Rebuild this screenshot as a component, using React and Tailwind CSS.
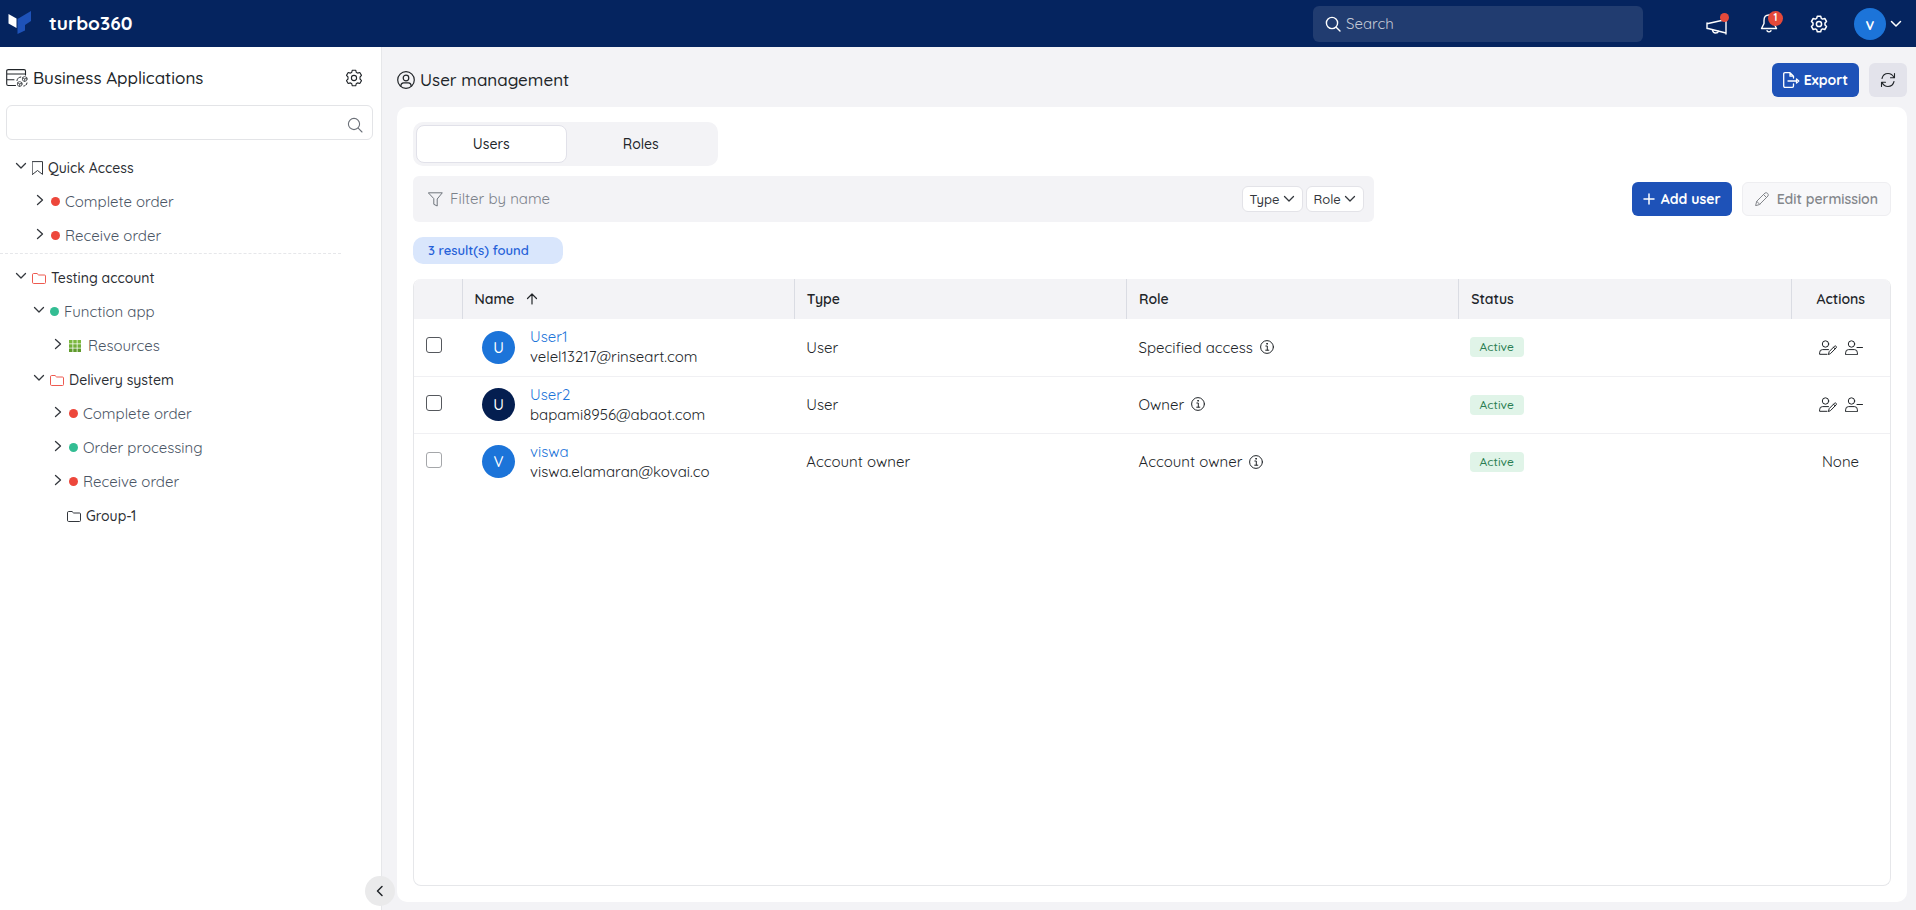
import React from "react";

const sv = (w, h, kids, sw = 1.2) => (
  <svg width={w} height={h} viewBox={`0 0 ${w} ${h}`} fill="none" stroke="currentColor" strokeWidth={sw} strokeLinecap="round" strokeLinejoin="round" aria-hidden="true" className="shrink-0">
    {kids}
  </svg>
);

const Logo = () => (
  <svg width="24" height="24" viewBox="0 0 24 24" aria-hidden="true" className="shrink-0">
    <path d="M0.500 3 L8.500 7.500 V17 L0.500 12.500 Z" fill="#fff" />
    <path d="M23 0 V10 L17 14 V19.500 L9.500 23 V8 Z" fill="#1e52b8" />
  </svg>
);
const Gear = ({ sw = 1.2 }) =>
  sv(18, 18, <>
    <path d="M7.300 1.200 H10.700 L11.300 3.400 L12.600 4.100 L14.800 3.500 L16.500 6.400 L15 8 V10 L16.500 11.600 L14.800 14.500 L12.600 13.900 L11.300 14.600 L10.700 16.800 H7.300 L6.700 14.600 L5.400 13.900 L3.200 14.500 L1.500 11.600 L3 10 V8 L1.500 6.400 L3.200 3.500 L5.400 4.100 L6.700 3.400 Z" />
    <circle cx="9" cy="9" r="2.600" />
  </>, sw);
const SearchIcon = ({ sw = 1.3 }) => sv(16, 16, <><circle cx="7" cy="7" r="5.600" /><path d="M11.200 11.200 L15 15" /></>, sw);
const Chevron = ({ dir = "down", sw = 1.5 }) =>
  sv(12, 12, dir === "down" ? <path d="M1.500 3.500 L6 8 L10.500 3.500" /> : dir === "right" ? <path d="M3.500 1.500 L8.500 6 L3.500 10.500" /> : <path d="M8 1.500 L3.500 6 L8 10.500" />, sw);
const Folder = () => sv(14, 11, <path d="M0.500 1.500 Q0.500 0.500 1.500 0.500 H5 L6.700 2 H12.500 Q13.500 2 13.500 3 V9.500 Q13.500 10.500 12.500 10.500 H1.500 Q0.500 10.500 0.500 9.500 Z" />, 1);
const Bookmark = () => sv(11, 14, <path d="M0.500 0.600 H10.500 V13.400 L5.500 9.500 L0.500 13.400 Z" />, 1);
const AppIcon = () =>
  sv(22, 18, <>
    <path d="M9.500 16.500 H2.300 Q0.700 16.500 0.700 15 V2 Q0.700 0.600 2.300 0.600 H18 Q19.500 0.600 19.500 2 V6 M0.700 5 H19.500 M0.700 10.800 H8" />
    <g strokeWidth="0.700">
      <circle cx="18.700" cy="10" r="2.400" />
      <circle cx="13.700" cy="15" r="2.400" />
      <path d="M18.700 10 V12.400 M16.600 8.900 L18.700 10 L20.800 8.900" />
      <path d="M13.700 15 V17.400 M11.600 13.900 L13.700 15 L15.800 13.900" />
      <path d="M11 11.500 Q11.500 8.500 14.800 8 M21 14 Q20.500 16.500 17.800 17" strokeWidth="1" strokeDasharray="2 1.500" />
    </g>
  </>, 1.1);
const Funnel = () => sv(15, 15, <path d="M0.700 0.800 H14.300 L9.200 7 V14 L5.800 12.300 V7 Z" />, 1);
const Info = () => sv(14, 14, <><circle cx="7" cy="7" r="6.400" /><path d="M5.800 6 H7.300 V10 M5.700 10.200 H8.800" /><circle cx="7" cy="3.800" r="0.400" fill="currentColor" /></>, 1);
const UserCircle = () => sv(18, 18, <><circle cx="9" cy="9" r="8.300" /><circle cx="9" cy="7" r="2.800" /><path d="M3.800 15 Q4 11.800 6.500 11.800 H11.500 Q14 11.800 14.200 15" /></>);
const UserEdit = () => sv(18, 15, <><circle cx="6.500" cy="4" r="3.200" /><path d="M8 14.300 H0.600 V12.800 Q0.600 9.600 3.500 9.600 H9.500" /><path d="M9.500 14.200 L10.200 11.600 L15.500 6.200 Q16.600 5.500 17.300 6.500 Q17.700 7.300 17 8 L11.800 13.300 Z M14.500 7.200 L16 8.800" /></>, 1);
const UserMinus = () => sv(18, 15, <><circle cx="6.500" cy="4" r="3.200" /><path d="M0.600 14.300 V12.800 Q0.600 9.600 3.500 9.600 H9.500 Q12.400 9.600 12.400 12.800 V14.300 Z M12 7.500 H17.500" /></>, 1);
const Pencil = () => sv(14, 14, <path d="M0.700 13.300 L1.700 9.300 L10 1 Q11.300 0.200 12.600 1.400 Q13.800 2.700 13 4 L4.700 12.300 Z M8.500 2.500 L11.500 5.500 M1.700 9.300 L4.700 12.300" />, 1);
const Plus = () => sv(12, 12, <path d="M6 1 V11 M1 6 H11" />, 1.5);
const ArrowUp = () => sv(12, 12, <path d="M6 11 V1.500 M1.500 5.500 L6 1 L10.500 5.500" />, 1.2);
const Megaphone = () => sv(22, 18, <><path d="M1 6 V11.500 M1 6.800 L20 2.500 V16 L1 11.200 M20 2 V17" /><path d="M6.500 12.800 Q7 16 9.500 16 Q12 16 12.500 14.300" /></>, 1.4);
const Bell = () => sv(18, 19, <><path d="M9 1 Q14 1 14 6.500 V9.500 L16.500 14.500 H1.500 L4 9.500 V6.500 Q4 1 9 1 Z" /><path d="M7 16.700 Q9 19 11 16.700" /></>, 1.4);
const ExportIcon = () => sv(17, 16, <><path d="M10.500 12 V14 Q10.500 15.300 9.200 15.300 H2 Q0.700 15.300 0.700 14 V2 Q0.700 0.700 2 0.700 H7 L10.500 4.200 V6 M7 0.700 V4.200 H10.500" /><path d="M5 9 H13 M13.500 7 L15.800 9 L13.500 11 Z" /></>, 1.3);
const Refresh = () => sv(16, 16, <path d="M2 6.500 Q3.200 1.500 8 1.500 Q12 1.500 14 5.500 M14.500 1.500 V5.700 H10.500 M14 9.500 Q12.800 14.500 8 14.500 Q4 14.500 2 10.500 M1.500 14.500 V10.300 H5.500" />, 1.1);
const GridIcon = () => (
  <svg width="14" height="12" viewBox="0 0 14 12" aria-hidden="true" className="shrink-0">
    {[0, 4.25, 8.5].map((y, r) => [0, 4.25, 8.5].map((x) => <rect key={x + "-" + y} x={x} y={y} width="3.500" height="3.500" fill={["#7cb83f", "#72ae38", "#5f9a2c"][r]} />))}
  </svg>
);

const Dot = ({ ok }) => <span className={`size-[9px] shrink-0 rounded-full ${ok ? "bg-[#33bd93]" : "bg-[#ed473b]"}`} />;
const RedFolder = () => <span className="text-[#ee5a50]"><Folder /></span>;

function Node({ pad, open, icon, label, strong }) {
  return (
    <li className={`flex h-[34px] items-center ${pad}`}>
      <button type="button" className="flex items-center gap-[5px] text-[#33373d]">
        {open === undefined ? null : <span className="pb-1"><Chevron dir={open ? "down" : "right"} sw={1.3} /></span>}
        {icon}
        <span className={strong ? "font-medium text-[#2b2e33]" : "text-[15px] text-[#4a5565]"}>{label}</span>
      </button>
    </li>
  );
}

const Th = ({ children, className = "text-left" }) => (
  <th scope="col" className={`h-10 border-l border-[#dadce3] px-3 font-semibold ${className}`}>{children}</th>
);

const users = [
  { name: "User1", mail: "velel13217@rinseart.com", ini: "U", bg: "bg-[#1c74d9]", type: "User", role: "Specified access", editable: true },
  { name: "User2", mail: "bapami8956@abaot.com", ini: "U", bg: "bg-[#041e50]", type: "User", role: "Owner", editable: true },
  { name: "viswa", mail: "viswa.elamaran@kovai.co", ini: "V", bg: "bg-[#1c74d9]", type: "Account owner", role: "Account owner", editable: false },
];

export default function App() {
  return (
    <div className="flex min-h-screen flex-col bg-white font-['Quicksand','Inter',sans-serif] text-sm text-[#212529]">
      <header className="flex h-[47px] items-center bg-[#05245f] pr-[14px] pl-2 text-white">
        <a href="#home" className="flex items-center gap-[17px]">
          <Logo />
          <span className="text-[19px] font-bold">turbo360</span>
        </a>
        <label className="mr-[63px] ml-auto flex h-9 w-[330px] items-center gap-[5px] rounded-md bg-[#213c70] px-3">
          <SearchIcon sw={1.4} />
          <input type="text" aria-label="Search" placeholder="Search" className="min-w-0 flex-1 bg-transparent text-[15px] outline-none placeholder:text-[#c3c9d6]" />
        </label>
        <div className="flex items-center">
          <button type="button" aria-label="Announcements" className="relative mr-8 pt-1">
            <Megaphone />
            <span className="absolute top-0 -right-px size-[9px] rounded-full bg-[#e5493a]" />
          </button>
          <button type="button" aria-label="Notifications" className="relative mr-8">
            <Bell />
            <span className="absolute -top-[3px] -right-[5px] flex size-[15px] items-center justify-center rounded-full bg-[#e5493a] text-[10px] font-bold">1</span>
          </button>
          <button type="button" aria-label="Settings" className="mr-[26px]"><Gear sw={1.5} /></button>
          <button type="button" aria-label="Account" className="flex items-center gap-1">
            <span className="flex size-8 items-center justify-center rounded-full bg-[#1c74d9] text-base font-semibold">v</span>
            <Chevron />
          </button>
        </div>
      </header>

      <div className="flex flex-1">
        <aside className="relative w-[382px] shrink-0 border-r border-[#e6e7ea] bg-white">
          <div className="flex h-[58px] items-center pt-1 pr-[18px] pl-[6px]">
            <AppIcon />
            <h2 className="ml-[5px] text-[17px] font-medium">Business Applications</h2>
            <button type="button" aria-label="Application settings" className="ml-auto"><Gear sw={1.1} /></button>
          </div>
          <label className="mr-2 ml-[6px] flex h-[35px] items-center rounded-md border border-[#e3e4e7] pt-1 pr-[9px] pl-3 text-[#6b7078]">
            <input type="text" aria-label="Search applications" className="min-w-0 flex-1 outline-none" />
            <SearchIcon sw={1.1} />
          </label>
          <ul className="mr-10 border-b border-dashed border-[#e6e7ea] pt-[11px]">
            <Node pad="pl-[15px]" open icon={<Bookmark />} label="Quick Access" strong />
            <Node pad="pl-[34px]" open={false} icon={<Dot />} label="Complete order" />
            <Node pad="pl-[34px]" open={false} icon={<Dot />} label="Receive order" />
          </ul>
          <ul className="pt-[7px]">
            <Node pad="pl-[15px]" open icon={<RedFolder />} label="Testing account" strong />
            <Node pad="pl-[33px]" open icon={<Dot ok />} label="Function app" />
            <Node pad="pl-[52px]" open={false} icon={<GridIcon />} label="Resources" />
            <Node pad="pl-[33px]" open icon={<RedFolder />} label="Delivery system" strong />
            <Node pad="pl-[52px]" open={false} icon={<Dot />} label="Complete order" />
            <Node pad="pl-[52px]" open={false} icon={<Dot ok />} label="Order processing" />
            <Node pad="pl-[52px]" open={false} icon={<Dot />} label="Receive order" />
            <Node pad="pl-[67px]" icon={<Folder />} label="Group-1" strong />
          </ul>
          <button type="button" aria-label="Collapse sidebar" className="absolute -right-[14px] bottom-1 z-10 flex size-[30px] items-center justify-center rounded-full bg-[#eaeaeb]">
            <Chevron dir="left" />
          </button>
        </aside>

        <main className="flex min-w-0 flex-1 flex-col bg-[#f3f3f6] pr-[9px] pb-2 pl-[15px]">
          <div className="flex h-[60px] items-center pt-[6px]">
            <UserCircle />
            <h1 className="ml-[5px] text-[17px] font-medium">User management</h1>
            <button type="button" className="ml-auto flex h-[34px] items-center gap-1 rounded-md bg-[#1e52b8] px-[11px] font-bold text-white">
              <ExportIcon /> Export
            </button>
            <button type="button" aria-label="Refresh" className="ml-[10px] flex h-[34px] w-[38px] items-center justify-center rounded-md bg-[#e3e3eb]">
              <Refresh />
            </button>
          </div>

          <section className="flex flex-1 flex-col rounded-[10px] bg-white px-4 pt-[15px] pb-4">
            <div role="tablist" className="flex h-11 w-[305px] rounded-[10px] bg-[#f3f3f6] p-[3px]">
              <button type="button" role="tab" aria-selected="true" className="flex-1 rounded-lg border border-[#e1e1e9] bg-white font-medium">Users</button>
              <button type="button" role="tab" aria-selected="false" className="flex-1 rounded-lg font-medium">Roles</button>
            </div>

            <div className="mt-[10px] flex items-center">
              <div className="flex h-[46px] w-[65%] items-center gap-[3px] rounded-md bg-[#f3f3f6] pr-[10px] pl-[15px] text-[#6f757d]">
                <Funnel />
                <input type="text" aria-label="Filter by name" placeholder="Filter by name" className="ml-1 min-w-0 flex-1 bg-transparent text-[15px] outline-none placeholder:text-[#7b818a]" />
                <button type="button" className="flex h-[26px] items-center gap-[3px] rounded-md border border-[#e3e3e8] bg-white px-[7px] text-[13px] font-medium text-[#33373d]">Type <Chevron sw={1.3} /></button>
                <button type="button" className="flex h-[26px] items-center gap-[3px] rounded-md border border-[#e3e3e8] bg-white px-[7px] text-[13px] font-medium text-[#33373d]">Role <Chevron sw={1.3} /></button>
              </div>
              <button type="button" className="ml-auto flex h-[34px] items-center gap-[6px] rounded-md bg-[#1e52b8] px-[11px] font-bold text-white"><Plus /> Add user</button>
              <button type="button" disabled className="ml-[10px] flex h-[34px] items-center gap-2 rounded-md border border-[#eeeef1] bg-[#f8f8fa] px-3 font-semibold text-[#83868b]"><Pencil /> Edit permission</button>
            </div>

            <p className="mt-[15px] flex h-[27px] w-[150px] items-center rounded-[10px] bg-[#d9e6fc] px-[15px] text-[13px] font-semibold text-[#2460d8]">3 result(s) found</p>

            <div className="mt-[15px] flex-1 overflow-hidden rounded-lg border border-t-0 border-[#e6e7ea]">
              <table className="w-full table-fixed border-collapse">
                <thead className="bg-[#f3f3f6]">
                  <tr>
                    <th scope="col" aria-label="Select" className="w-12" />
                    <Th><span className="flex items-center gap-3">Name <ArrowUp /></span></Th>
                    <Th>Type</Th>
                    <Th>Role</Th>
                    <Th>Status</Th>
                    <Th className="w-[99px] text-center">Actions</Th>
                  </tr>
                </thead>
                <tbody className="text-[15px]">
                  {users.map((u, i) => (
                    <tr key={u.name} className={i < users.length - 1 ? "h-[57px] border-b border-[#f0f0f3]" : "h-[57px]"}>
                      <td className="pb-1 pl-3">
                        <input type="checkbox" aria-label={`Select ${u.name}`} disabled={!u.editable} className="block size-4 appearance-none rounded-[3px] border border-[#55585d] bg-white disabled:border-[#a5a7aa]" />
                      </td>
                      <td className="pl-5">
                        <div className="flex items-center gap-[15px]">
                          <span className={`flex size-[33px] shrink-0 items-center justify-center rounded-full font-medium text-white ${u.bg}`}>{u.ini}</span>
                          <div className="leading-5">
                            <a href="#user" className="block text-[#1c74d9]">{u.name}</a>
                            <span className="block">{u.mail}</span>
                          </div>
                        </div>
                      </td>
                      <td className="px-3">{u.type}</td>
                      <td className="px-3"><span className="flex items-center gap-[7px]">{u.role} <Info /></span></td>
                      <td className="px-[11px]"><span className="flex h-5 w-[54px] items-center justify-center rounded bg-[#e0f4e8] text-xs font-medium text-[#2a7d52]">Active</span></td>
                      <td className="text-center">
                        {u.editable ? (
                          <span className="flex items-center justify-center gap-2">
                            <button type="button" aria-label={`Edit ${u.name}`}><UserEdit /></button>
                            <button type="button" aria-label={`Remove ${u.name}`}><UserMinus /></button>
                          </span>
                        ) : "None"}
                      </td>
                    </tr>
                  ))}
                </tbody>
              </table>
            </div>
          </section>
        </main>
      </div>
    </div>
  );
}
